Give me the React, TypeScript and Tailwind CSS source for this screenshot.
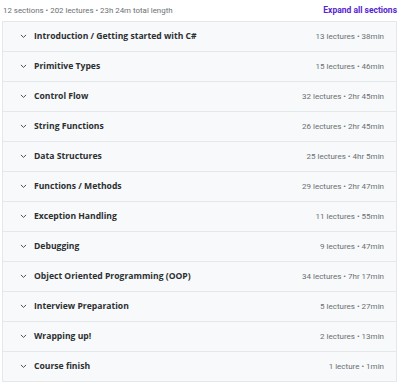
const sections = [
  { title: "Introduction / Getting started with C#", meta: "13 lectures • 38min" },
  { title: "Primitive Types", meta: "15 lectures • 46min" },
  { title: "Control Flow", meta: "32 lectures • 2hr 45min" },
  { title: "String Functions", meta: "26 lectures • 2hr 45min" },
  { title: "Data Structures", meta: "25 lectures • 4hr 5min" },
  { title: "Functions / Methods", meta: "29 lectures • 2hr 47min" },
  { title: "Exception Handling", meta: "11 lectures • 55min" },
  { title: "Debugging", meta: "9 lectures • 47min" },
  { title: "Object Oriented Programming (OOP)", meta: "34 lectures • 7hr 17min" },
  { title: "Interview Preparation", meta: "5 lectures • 27min" },
  { title: "Wrapping up!", meta: "2 lectures • 13min" },
  { title: "Course finish", meta: "1 lecture • 1min" },
];

function Chevron() {
  return (
    <svg width="7" height="5" viewBox="0 0 7 5" className="shrink-0">
      <polyline
        points="1.2,1.2 3.5,3.4 5.8,1.2"
        fill="none"
        stroke="#3e4143"
        strokeWidth="0.9"
        strokeLinecap="round"
        strokeLinejoin="round"
      />
    </svg>
  );
}

export default function App() {
  return (
    <div className="w-[400px] h-[382px] bg-white font-['Roboto',sans-serif] overflow-hidden">
      {/* Header */}
      <div className="h-[21px] flex items-center justify-between pl-[3px] pr-[3px]">
        <span className="text-[7.9px] text-[#6a6f73]">
          12 sections • 202 lectures • 23h 24m total length
        </span>
        <button className="text-[8.5px] font-bold text-[#5624d0]">
          Expand all sections
        </button>
      </div>

      {/* Sections */}
      <div className="ml-[2px] mr-[3px] border border-b-0 border-[#e4e8eb]">
        {sections.map((s) => (
          <div
            key={s.title}
            className="h-[30px] flex items-center bg-[#f7f9fa] border-b border-[#e4e8eb] pl-[17px] pr-[12px]"
          >
            <Chevron />
            <span className="ml-[7px] text-[8.6px] font-bold text-[#2d2f31] flex-1 font-['Open_Sans',sans-serif]">
              {s.title}
            </span>
            <span className="text-[8px] text-[#6a6f73]">{s.meta}</span>
          </div>
        ))}
      </div>
    </div>
  );
}
